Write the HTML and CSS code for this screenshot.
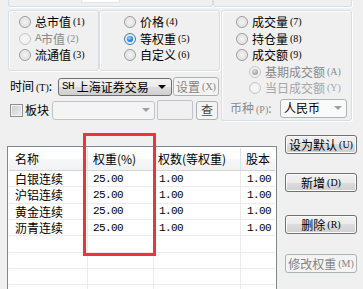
FILE: index.html
```html
<!DOCTYPE html>
<html>
<head>
<meta charset="utf-8">
<link rel="stylesheet" href="styles.css">
</head>
<body>
<div class="top-strip">
  <div class="tb tb1"><div class="tb-input"></div></div>
  <div class="tb tb2"></div>
</div>

<div class="opts">
  <div class="left-col">
    <div class="groups">
      <div class="group g1">
        <div class="opt"><span class="radio"></span>总市值<span class="k">(1)</span></div>
        <div class="opt dis"><span class="radio"></span><span class="mono">A</span>市值<span class="k">(2)</span></div>
        <div class="opt"><span class="radio"></span>流通值<span class="k">(3)</span></div>
      </div>
      <div class="group g2">
        <div class="opt"><span class="radio"></span>价格<span class="k">(4)</span></div>
        <div class="opt"><span class="radio on"></span>等权重<span class="k">(5)</span></div>
        <div class="opt"><span class="radio"></span>自定义<span class="k">(6)</span></div>
      </div>
    </div>
    <div class="time-row">
      <span class="lbl-time">时间<span class="k">(T)</span>:</span>
      <div class="combo combo-time"><span class="mono">SH</span>&nbsp;上海证券交易<span class="arrow"></span></div>
      <div class="btn btn-dis btn-set">设置<span class="k">(X)</span></div>
    </div>
    <div class="block-row">
      <span class="check"></span>
      <span class="lbl-block">板块</span>
      <div class="combo combo-dis combo-block"><span class="arrow"></span></div>
      <div class="textbox"></div>
      <div class="btn btn-light btn-query">查</div>
    </div>
  </div>

  <div class="group g3">
    <div class="opt"><span class="radio"></span>成交量<span class="k">(7)</span></div>
    <div class="opt"><span class="radio"></span>持仓量<span class="k">(8)</span></div>
    <div class="opt"><span class="radio"></span>成交额<span class="k">(9)</span></div>
    <div class="opt sub dis"><span class="radio on-dis"></span>基期成交额<span class="k">(A)</span></div>
    <div class="opt sub dis light"><span class="radio"></span>当日成交额<span class="k">(Y)</span></div>
    <div class="cur-row">
      <span class="lbl-cur">币种<span class="k">(P)</span>:</span>
      <div class="combo combo-cur">人民币<span class="arrow"></span></div>
    </div>
  </div>
</div>

<div class="bottom">
  <div class="list">
    <div class="lv-head">
      <span class="c1">名称</span>
      <span class="c2">权重(%)</span>
      <span class="c3">权数(等权重)</span>
      <span class="c4">股本</span>
    </div>
    <div class="lv-row">
      <span class="c1">白银连续</span><span class="c2 num">25.00</span><span class="c3 num">1.00</span><span class="c4 num">1.00</span>
    </div>
    <div class="lv-row">
      <span class="c1">沪铝连续</span><span class="c2 num">25.00</span><span class="c3 num">1.00</span><span class="c4 num">1.00</span>
    </div>
    <div class="lv-row">
      <span class="c1">黄金连续</span><span class="c2 num">25.00</span><span class="c3 num">1.00</span><span class="c4 num">1.00</span>
    </div>
    <div class="lv-row">
      <span class="c1">沥青连续</span><span class="c2 num">25.00</span><span class="c3 num">1.00</span><span class="c4 num">1.00</span>
    </div>
    <div class="lv-row"><span class="c1"></span><span class="c2"></span><span class="c3"></span><span class="c4"></span></div>
    <div class="lv-row"><span class="c1"></span><span class="c2"></span><span class="c3"></span><span class="c4"></span></div>
    <div class="lv-row"><span class="c1"></span><span class="c2"></span><span class="c3"></span><span class="c4"></span></div>
    <div class="lv-row"><span class="c1"></span><span class="c2"></span><span class="c3"></span><span class="c4"></span></div>
  </div>
  <div class="side">
    <div class="btn b1">设为默认<span class="k">(U)</span></div>
    <div class="btn b2">新增<span class="k">(D)</span></div>
    <div class="btn b3">删除<span class="k">(R)</span></div>
    <div class="btn btn-dis b4">修改权重<span class="k">(M)</span></div>
  </div>
</div>

<div class="mark"></div>
</body>
</html>
```

FILE: styles.css
```css
* { box-sizing: border-box; }
html, body { margin: 0; padding: 0; }
body {
  width: 363px;
  height: 289px;
  overflow: hidden;
  position: relative;
  background: #f0f0f0;
  font-family: "Noto Sans CJK SC", "Noto Sans", sans-serif;
  font-size: 12px;
  line-height: 1;
  color: #000;
}
.k {
  font-family: "Liberation Serif", serif;
  font-size: 10px;
  margin-left: 2px;
}
.mono {
  font-family: "Liberation Mono", monospace;
  font-size: 11px;
  letter-spacing: -0.6px;
}

/* top strip: bottoms of previous group boxes */
.top-strip { display: flex; height: 7px; padding-left: 8px; }
.tb {
  height: 7px;
  border: 1px solid #d5dfe5;
  border-top: none;
  border-radius: 0 0 3px 3px;
  box-shadow: 1px 1px 0 #fff;
}
.tb1 { width: 205px; }
.tb2 { width: 139px; }
.tb-input {
  margin-left: 72px;
  width: 39px;
  height: 3px;
  background: #fff;
  border: 1px solid #e2e6ea;
  border-top: none;
}

/* options area */
.opts { display: flex; align-items: flex-start; margin-top: 3px; padding-left: 8px; }
.left-col { width: 212px; }
.groups { display: flex; }
.group {
  border: 1px solid #d5dfe5;
  border-radius: 3px;
  box-shadow: inset 1px 1px 0 #fff, 1px 1px 0 #fff;
}
.g1 { width: 91px; height: 61px; padding: 3px 0 0 10px; }
.g2 { width: 121px; height: 61px; padding: 3px 0 0 24px; }
.g3 { width: 131px; height: 111px; margin-left: 1px; padding-top: 3px; }
.g3 .opt { padding-left: 14px; }
.g3 .opt.sub { padding-left: 27px; }

.opt { display: flex; align-items: center; height: 16.5px; white-space: nowrap; }
.opt.dis { color: #8a8a8a; }
.opt.light { color: #a6a6a6; }
.radio {
  flex: none;
  width: 12px;
  height: 12px;
  margin-right: 4px;
  border-radius: 50%;
  border: 1px solid #9a9a9a;
  background: radial-gradient(circle at 50% 50%, #f6f6f6 0%, #e6e6e6 45%, #c9c9c9 100%);
  box-shadow: inset 0 0 0 1px #f2f2f2;
  position: relative;
}
.radio.on {
  border-color: #3c7fb1;
}
.radio.on::after, .radio.on-dis::after {
  content: "";
  position: absolute;
  left: 2px; top: 2px;
  width: 6px; height: 6px;
  border-radius: 50%;
  background: radial-gradient(circle at 40% 35%, #9ee0ff 0%, #2f8ad8 50%, #0f4f8f 100%);
}
.opt.dis .radio { border-color: #c6c6c6; background: radial-gradient(circle, #f7f7f7, #ececec); box-shadow: none; }
.radio.on-dis::after { background: radial-gradient(circle at 40% 35%, #e0e0e0 0%, #a8a8a8 60%, #8c8c8c 100%); }

/* time row */
.time-row { display: flex; align-items: center; height: 19px; margin-top: 6px; padding-left: 2px; }
.lbl-time { width: 48px; white-space: nowrap; }
.combo {
  display: flex;
  align-items: center;
  height: 18px;
  padding-left: 3px;
  border: 1px solid #707070;
  border-radius: 3px;
  background: linear-gradient(#f2f2f2, #ebebeb 50%, #dddddd 50%, #cfcfcf);
  white-space: nowrap;
}
.arrow {
  margin-left: auto;
  width: 0; height: 0;
  border-left: 4px solid transparent;
  border-right: 4px solid transparent;
  border-top: 4px solid #000;
}
.combo-time { width: 114px; }
.combo-time .arrow { margin-right: 5px; }
.combo-dis {
  border-color: #c0c4c8;
  background: #f4f4f4;
}
.combo-dis .arrow, .combo-cur .arrow { border-top-color: #a0a0a0; }
.combo-block { width: 103px; height: 19px; margin-left: 2px; }
.combo-block .arrow { margin-right: 4px; }

.btn {
  display: flex;
  align-items: center;
  justify-content: center;
  height: 19px;
  border: 1px solid #707070;
  border-radius: 3px;
  background: linear-gradient(#f2f2f2, #ebebeb 50%, #dddddd 50%, #cfcfcf);
  box-shadow: inset 0 0 0 1px #fcfcfc;
  white-space: nowrap;
}
.btn-dis {
  border-color: #adb2b5;
  background: #f4f4f4;
  box-shadow: none;
  color: #838383;
}
.btn-light {
  border-color: #adb2b5;
  background: #f4f4f4;
  box-shadow: none;
  color: #444;
}
.btn-set { width: 46px; margin-left: 1px; }

/* block row */
.block-row { display: flex; align-items: center; height: 20px; margin-top: 4px; padding-left: 2px; }
.check {
  flex: none;
  width: 13px;
  height: 13px;
  border: 1px solid #8e8f8f;
  background: linear-gradient(135deg, #c9cdd2, #eeeeee);
  box-shadow: inset 0 0 0 1px #f4f4f4;
}
.lbl-block { margin-left: 2px; width: 25px; }
.textbox {
  width: 36px;
  height: 20px;
  margin-left: 2px;
  border: 1px solid #c0c4c8;
  border-radius: 2px;
  background: #f0f0f0;
}
.btn-query { width: 22px; margin-left: 3px; }

/* currency row */
.cur-row { display: flex; align-items: center; height: 19px; margin-top: 2px; padding-left: 8px; }
.lbl-cur { width: 50px; color: #8a8a8a; white-space: nowrap; }
.combo-cur {
  width: 67px;
  height: 19px;
  border-color: #adb2b5;
  background: #fafafa;
}
.combo-cur .arrow { margin-right: 4px; }

/* bottom */
.bottom { display: flex; align-items: flex-start; margin-top: 14px; padding-left: 7px; }
.list {
  width: 270px;
  height: 144px;
  overflow: hidden;
  margin-top: 11px;
  border: 1px solid #828790;
  border-bottom: none;
  padding: 1px 1px 0 1px;
  background: #fff;
}
.lv-head, .lv-row {
  display: grid;
  grid-template-columns: 79px 66px 87px 1fr;
}
.lv-head {
  height: 23px;
  background: linear-gradient(#ffffff, #ffffff 50%, #f6f7f9 50%, #f1f2f4);
  border-bottom: 1px solid #d5d5d5;
}
.lv-head span {
  display: flex;
  align-items: center;
  border-right: 1px solid #dfe3e8;
  white-space: nowrap;
  overflow: hidden;
}
.lv-head .c4 { border-right: none; }
.lv-row { height: 16.33px; border-bottom: 1px solid #ececec; }
.lv-row span {
  display: flex;
  align-items: center;
  padding-top: 1px;
  border-right: 1px solid #ececec;
  white-space: nowrap;
}
.lv-row .c4 { border-right: none; justify-content: flex-end; padding-right: 4px; }
.c1 { padding-left: 6px; }
.c2 { padding-left: 5px; }
.lv-head .c3 { padding-left: 4px; }
.lv-row .c3 { padding-left: 5px; }
.lv-head .c4 { padding-left: 5px; }
.num {
  font-family: "Liberation Mono", monospace;
  font-size: 11px;
  letter-spacing: -0.6px;
}

.side { display: flex; flex-direction: column; width: 72px; margin-left: 8px; }
.b2 { margin-top: 19px; }
.b3 { margin-top: 23px; }
.b4 { margin-top: 20px; }

/* annotation overlay */
.mark {
  position: absolute;
  left: 83px;
  top: 133px;
  width: 73px;
  height: 123px;
  border: 3px solid #e8373c;
}
```
